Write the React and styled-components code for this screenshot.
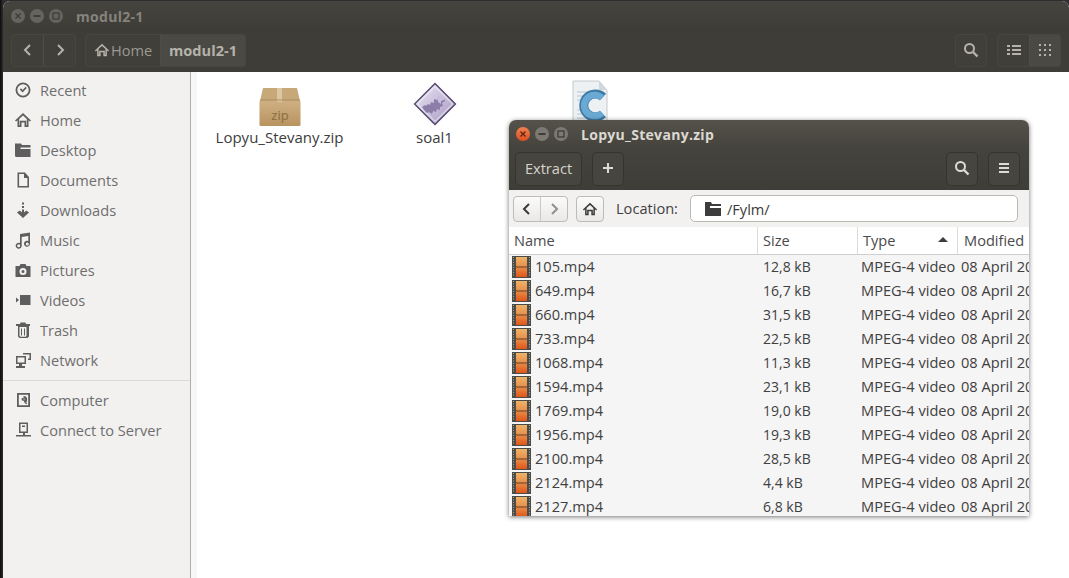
import React from 'react'
import styled, { createGlobalStyle } from 'styled-components'

const GlobalStyle = createGlobalStyle`
  html, body {
    margin: 0;
    padding: 0;
    width: 1069px;
    height: 578px;
    overflow: hidden;
    background: #1a1a1a;
    font-family: 'Open Sans', 'Noto Sans', sans-serif;
  }
`

const Desktop = styled.div`
  position: relative;
  width: 1069px;
  height: 578px;
  overflow: hidden;
  background: linear-gradient(90deg, #0c0c0c 0, #2e2e2e 3px);
`

const FileWindow = styled.div`
  display: flex;
  flex-direction: column;
  height: 577px;
  margin: 1px 0 0 3px;
  border-radius: 7px 7px 0 0;
  overflow: hidden;
  background: #fff;
`

const TitleBar = styled.div`
  display: flex;
  align-items: center;
  gap: 13px;
  height: 30px;
  padding-left: 8px;
  flex: none;
  background: linear-gradient(#45443f, #3d3c37);
`

const Title = styled.span`
  font-size: 14px;
  font-weight: 700;
  letter-spacing: 0.3px;
  color: ${(p) => (p.$active ? '#dcd9d2' : '#86837c')};
`

const WindowButtons = styled.div`
  display: flex;
  gap: 5px;
`

const RoundButton = styled.span`
  display: flex;
  align-items: center;
  justify-content: center;
  width: 14px;
  height: 14px;
  border-radius: 50%;
  background: ${(p) => (p.$close ? 'linear-gradient(#f0824f, #dc4e21)' : p.$active ? '#7b7972' : '#66645e')};
  color: ${(p) => (p.$close ? '#5a2410' : '#3e3d38')};
`

const ToolBar = styled.div`
  display: flex;
  align-items: center;
  height: 41px;
  padding: 3px 8px 5px 8px;
  flex: none;
  background: #3e3d38;
  box-sizing: border-box;
`

const ToolGroup = styled.div`
  display: flex;
  height: 33px;
  margin-right: ${(p) => p.$gap || 0}px;
  border: 1px solid #48463f;
  border-radius: 4px;
  box-sizing: border-box;
  background: #403f3a;
`

const ToolSpacer = styled.div`
  flex: 1;
`

const ToolButton = styled.div`
  display: flex;
  align-items: center;
  justify-content: center;
  gap: 1px;
  width: ${(p) => (p.$width ? `${p.$width}px` : 'auto')};
  padding-bottom: 1px;
  font-size: 14.6px;
  font-weight: ${(p) => (p.$bold ? 700 : 400)};
  color: ${(p) => (p.$bold ? '#b5b2aa' : '#9c9991')};
  background: ${(p) => (p.$on ? '#4a4943' : 'transparent')};
  & + & {
    border-left: 1px solid #4f4d46;
  }
`

const Body = styled.div`
  display: flex;
  flex: 1;
  min-height: 0;
`

const Sidebar = styled.nav`
  width: 188px;
  padding-top: 3px;
  box-sizing: border-box;
  background: #f2f1f0;
  border-right: 1px solid #adadad;
`

const SideRow = styled.div`
  display: flex;
  align-items: center;
  gap: 8px;
  height: 30px;
  padding-left: 11px;
  font-size: 14.6px;
  color: #6e6e6e;
`

const SideIcon = styled.svg`
  width: 18px;
  height: 18px;
  flex: none;
  fill: #5e5e5e;
`

const SideRule = styled.div`
  height: 1px;
  margin: 5px 0 4px;
  background: #dcdbd9;
`

const Gutter = styled.div`
  width: 6px;
  background: #f7f7f6;
`

const IconGrid = styled.div`
  display: flex;
  align-items: flex-start;
  padding: 8px 0 0 5px;
`

const FileItem = styled.div`
  display: flex;
  flex-direction: column;
  align-items: center;
  width: 155px;
`

const FileImage = styled.svg`
  width: 48px;
  height: 48px;
`

const FileName = styled.span`
  margin-top: -1px;
  font-size: 15px;
  color: #3c3c3c;
  white-space: nowrap;
`

const ArchiveWindow = styled.div`
  position: absolute;
  left: 509px;
  top: 120px;
  display: flex;
  flex-direction: column;
  width: 520px;
  height: 396px;
  border-radius: 7px 7px 0 0;
  overflow: hidden;
  background: #f5f5f5;
  box-shadow: 0 1px 5px rgba(0, 0, 0, 0.55);
`

const ArchiveTitleBar = styled(TitleBar)`
  height: 28px;
  padding-left: 7px;
  background: linear-gradient(#55524b, #45433d);
`

const ArchiveToolBar = styled.div`
  display: flex;
  align-items: center;
  gap: 10px;
  height: 42px;
  padding: 4px 9px 4px 6px;
  flex: none;
  box-sizing: border-box;
  background: linear-gradient(#45433d, #3f3d38);
`

const HeaderButton = styled.div`
  display: flex;
  align-items: center;
  justify-content: center;
  width: ${(p) => p.$width || 32}px;
  height: 34px;
  padding-bottom: 2px;
  box-sizing: border-box;
  border: 1px solid #35342f;
  border-radius: 5px;
  background: #47453f;
  font-size: 14.6px;
  color: #d6d3cc;
`

const LocationBar = styled.div`
  display: flex;
  align-items: center;
  height: 37px;
  padding: 0 11px 0 4px;
  flex: none;
  box-sizing: border-box;
  background: #f2f1f0;
`

const NavGroup = styled.div`
  display: flex;
  height: 26px;
  margin-right: 8px;
  border: 1px solid #bdbcb9;
  border-radius: 4px;
  box-sizing: border-box;
  background: linear-gradient(#fbfbfb, #e9e8e6);
  overflow: hidden;
`

const NavButton = styled.div`
  display: flex;
  align-items: center;
  justify-content: center;
  width: ${(p) => p.$width}px;
  color: ${(p) => (p.$dim ? '#8f8f8f' : '#3b3b3b')};
  & + & {
    border-left: 1px solid #c9c8c5;
  }
`

const LocationLabel = styled.span`
  margin: -2px 12px 0 4px;
  font-size: 14.6px;
  color: #3f3f3f;
`

const LocationInput = styled.div`
  display: flex;
  flex: 1;
  align-items: center;
  gap: 5px;
  height: 27px;
  padding-left: 13px;
  box-sizing: border-box;
  border: 1px solid #b9b8b5;
  border-radius: 5px;
  background: #fff;
  font-size: 14.6px;
  color: #3a3a3a;
`

const Columns = 'grid-template-columns: 249px 100px 100px 71px;'

const HeadRow = styled.div`
  display: grid;
  ${Columns}
  height: 28px;
  background: #fff;
  border-bottom: 1px solid #cfcfcd;
  box-sizing: border-box;
  flex: none;
`

const HeadCell = styled.div`
  display: flex;
  align-items: center;
  justify-content: space-between;
  padding: 0 9px 2px 5px;
  font-size: 14.6px;
  color: #4a4a4a;
  white-space: nowrap;
  overflow: hidden;
  border-right: 1px solid #dcdcda;
  &:last-child {
    border-right: 0;
    padding: 0 0 2px 6px;
  }
`

const SortArrow = styled.span`
  width: 0;
  height: 0;
  border-left: 5px solid transparent;
  border-right: 5px solid transparent;
  border-bottom: 5px solid #3d3d3d;
`

const Row = styled.div`
  display: grid;
  ${Columns}
  height: 24px;
  flex: none;
  font-size: 14.6px;
  color: #404040;
`

const Cell = styled.div`
  display: flex;
  align-items: center;
  gap: 4px;
  padding: 0 0 2px 3px;
  white-space: nowrap;
  overflow: hidden;
`

const SizeCell = styled(Cell)`
  padding-left: 5px;
  font-size: 14px;
`

const FilmImage = styled.svg`
  flex: none;
  width: 19px;
  height: 22px;
  margin-bottom: -2px;
`

const sideTop = [
  ['Recent', 'recent'],
  ['Home', 'home'],
  ['Desktop', 'folder'],
  ['Documents', 'doc'],
  ['Downloads', 'down'],
  ['Music', 'music'],
  ['Pictures', 'camera'],
  ['Videos', 'video'],
  ['Trash', 'trash'],
  ['Network', 'network'],
]

const sideBottom = [
  ['Computer', 'computer'],
  ['Connect to Server', 'server'],
]

const files = [
  ['105.mp4', '12,8 kB'],
  ['649.mp4', '16,7 kB'],
  ['660.mp4', '31,5 kB'],
  ['733.mp4', '22,5 kB'],
  ['1068.mp4', '11,3 kB'],
  ['1594.mp4', '23,1 kB'],
  ['1769.mp4', '19,0 kB'],
  ['1956.mp4', '19,3 kB'],
  ['2100.mp4', '28,5 kB'],
  ['2124.mp4', '4,4 kB'],
  ['2127.mp4', '6,8 kB'],
]

const glyphs = {
  recent: (
    <>
      <path fillRule="evenodd" d="M9 1.5a7.5 7.5 0 1 0 0 15 7.5 7.5 0 0 0 0-15zm0 1.8a5.7 5.7 0 1 1 0 11.4A5.7 5.7 0 0 1 9 3.3z" />
      <path d="M5.8 8.4l1.2-1.1 1.6 1.7 3-3.2 1.2 1.1-4.2 4.5z" />
    </>
  ),
  home: <path fillRule="evenodd" d="M9 2L1 9.5l1.1 1.1L3.5 9.3V16h4v-4.5h3V16h4V9.3l1.4 1.3L17 9.5zM5.2 8l3.8-3.6L12.8 8v6.3h-.6V9.8H5.8v4.5h-.6z" />,
  folder: <path d="M1 2.5h6L8 4h8.5v2.5h-10V8h10v8h-14A1.5 1.5 0 0 1 1 14.5z" />,
  doc: <path fillRule="evenodd" d="M3.5 1.5H11l4 4.5v10.500H3.5zm1.600 1.600v11.800h8.300V7H10V3.100z" />,
  down: (
    <>
      <rect x="8" y="1.5" width="2" height="2" />
      <rect x="8" y="5" width="2" height="2" />
      <path d="M8 8.5h2v3l2.200-2 1.200 1.200L9 14.700l-4.400-4 1.200-1.200L8 11.500zM3 11.500l1.300-1.300 4.700 4.300 4.700-4.300 1.300 1.300L9 17z" />
    </>
  ),
  music: <path fillRule="evenodd" d="M6 3l10-1.500v11.200a3 3 0 1 1-1.700-2.700V5L7.700 6v8.700a3 3 0 1 1-1.700-2.700zm-1.300 10.300a1.500 1.500 0 1 0 0 3 1.500 1.500 0 0 0 0-3zm8.600-1.900a1.500 1.500 0 1 0 0 3 1.500 1.500 0 0 0 0-3z" />,
  camera: <path fillRule="evenodd" d="M6.500 3h5l1 2h4v11h-15V5h4zM9 7a3.500 3.500 0 1 0 0 7 3.500 3.500 0 0 0 0-7zm0 2a1.500 1.500 0 1 1 0 3 1.500 1.500 0 0 1 0-3z" />,
  video: (
    <>
      <rect x="6" y="4" width="10.5" height="10" />
      <path d="M2 6.500L5 9l-3 2.500z" />
    </>
  ),
  trash: <path fillRule="evenodd" d="M6.500 1.500h5l.5 1.500h4v2h-1v10.500l-1.500 1.500h-8L4 15.500V5H2V3h4zM5.500 6v9l.8.700h5.400l.8-.700V6zM7 7.500h1v7H7zm3 0h1v7h-1z" />,
  network: (
    <>
      <path fillRule="evenodd" d="M2 5h10v8H8v2h3v2H2v-2h3v-2H2zm1.500 1.500v5h7v-5z" />
      <path d="M9 2h8v7h-3V7.500h1.500V3.500H9z" />
    </>
  ),
  computer: <path fillRule="evenodd" d="M3 2h13v14H3zm1.800 1.800v10.400h9.400V3.800zM9.500 5a3.700 3.700 0 0 1 3.700 3.700c0 1-.4 1.900-1 2.600l1 1.200-1 .8-2.200-2.400zm-.5 1.700a1.500 1.500 0 1 0 0 3 1.500 1.500 0 0 0 0-3z" />,
  server: <path fillRule="evenodd" d="M5 1.500h9v10.500H11v2h6v1.500H2V14h7v-2H5zm1.500 1.500v7.500h6V3zM8 4.500h3V6H8z" />,
}

const SideItem = ({ label, icon }) => (
  <SideRow>
    <SideIcon viewBox="0 0 18 18">{glyphs[icon]}</SideIcon>
    {label}
  </SideRow>
)

const WinControls = ({ active }) => (
  <WindowButtons>
    <RoundButton $close={active} $active={active}>
      <svg width="8" height="8" viewBox="0 0 8 8">
        <path d="M1.500 1.500l5 5m0-5l-5 5" stroke="currentColor" strokeWidth="1.300" />
      </svg>
    </RoundButton>
    <RoundButton $active={active}>
      <svg width="8" height="8" viewBox="0 0 8 8">
        <rect x="0.5" y="3" width="7" height="2" fill="currentColor" />
      </svg>
    </RoundButton>
    <RoundButton $active={active}>
      <svg width="8" height="8" viewBox="0 0 8 8">
        <rect x="1" y="1" width="6" height="6" fill="none" stroke="currentColor" strokeWidth="1.300" />
      </svg>
    </RoundButton>
  </WindowButtons>
)

const Chevron = ({ dir, color = 'currentColor', size = 14 }) => (
  <svg width={size} height={size} viewBox="0 0 14 14">
    <path
      d={dir === 'left' ? 'M9 2L4 7l5 5' : 'M5 2l5 5-5 5'}
      fill="none"
      stroke={color}
      strokeWidth="2"
    />
  </svg>
)

const HomeGlyph = ({ color, size = 16 }) => (
  <svg width={size} height={size} viewBox="0 0 18 18" fill={color}>
    {glyphs.home}
  </svg>
)

const SearchGlyph = ({ color }) => (
  <svg width="16" height="16" viewBox="0 0 16 16">
    <circle cx="6.5" cy="6.5" r="4.5" fill="none" stroke={color} strokeWidth="2" />
    <path d="M10 10l4.500 4.500" stroke={color} strokeWidth="2.400" />
  </svg>
)

const ZipIcon = () => (
  <FileImage viewBox="0 0 48 48">
    <defs>
      <linearGradient id="boxFront" x1="0" y1="0" x2="0" y2="1">
        <stop offset="0" stopColor="#d0b184" />
        <stop offset="1" stopColor="#b8935f" />
      </linearGradient>
    </defs>
    <path d="M7 8h34l3 13H4z" fill="#c7a878" />
    <rect x="3.5" y="20" width="41" height="26" rx="1.5" fill="url(#boxFront)" />
    <rect x="21" y="8" width="5" height="14" fill="#dcc7a4" />
    <path d="M4 20h40" stroke="#a98a5c" />
    <text x="24" y="40" textAnchor="middle" fontSize="13" fontFamily="Open Sans" fill="#8a6c44">
      zip
    </text>
  </FileImage>
)

const DiamondIcon = () => (
  <FileImage viewBox="0 0 48 48">
    <defs>
      <linearGradient id="diamond" x1="0" y1="0" x2="1" y2="1">
        <stop offset="0" stopColor="#eee9f5" />
        <stop offset="1" stopColor="#a395c0" />
      </linearGradient>
    </defs>
    <path d="M24 3.500L44.500 24 24 44.500 3.500 24z" fill="url(#diamond)" stroke="#4f4368" strokeWidth="1.300" />
    <path d="M24 6.500L41.500 24 24 41.500 6.500 24z" fill="none" stroke="#f7f4fa" />
    <path d="M11 27l3-2 1 1 2-2 2 1 1-3 3 1 0-4 3 1 2-3 2 2 3-1 1 3-3 2 1 3-3 1 0 3-3-1-1 3-3-1-1 3-3-2-2 1-3-3z" fill="#8d7da9" />
    <path d="M26 17l3-2 2 2 3 0-1 3-3 1 0 3-3-2z" fill="#c9bedb" />
  </FileImage>
)

const CFileIcon = () => (
  <FileImage viewBox="0 0 48 48">
    <path d="M7 1h26l8 9v38H7z" fill="#eef1f3" stroke="#c4c8cb" />
    <path d="M33 1v9h8z" fill="#cfd8de" />
    <path d="M11 12h18M11 16h18M11 20h6M11 30h6M11 34h22M11 38h22" stroke="#b8c6d0" />
    <path d="M37 17a11.500 11.500 0 1 0 0 17" fill="none" stroke="#3f7aa6" strokeWidth="9" />
    <path d="M36 18a10.500 10.500 0 1 0 0 15" fill="none" stroke="#69a9d4" strokeWidth="6.500" />
  </FileImage>
)

const FilmIcon = () => (
  <FilmImage viewBox="0 0 19 22">
    <defs>
      <linearGradient id="film" x1="0" y1="0" x2="0" y2="1">
        <stop offset="0" stopColor="#eeb46a" />
        <stop offset="0.5" stopColor="#e88d45" />
        <stop offset="1" stopColor="#e0561a" />
      </linearGradient>
    </defs>
    <rect width="19" height="22" fill="#4b4b48" />
    <path d="M1.500 1v20M17.500 1v20" stroke="#a8a8a3" strokeDasharray="1 1.500" />
    <rect x="4" y="1" width="11" height="20" fill="url(#film)" />
    <path d="M4 11h11" stroke="#5a4030" />
  </FilmImage>
)

export default function App() {
  return (
    <Desktop>
      <GlobalStyle />
      <FileWindow>
        <TitleBar>
          <WinControls />
          <Title>modul2-1</Title>
        </TitleBar>
        <ToolBar>
          <ToolGroup $gap={9}>
            <ToolButton $width={31}>
              <Chevron dir="left" color="#b5b2aa" />
            </ToolButton>
            <ToolButton $width={31}>
              <Chevron dir="right" color="#b5b2aa" />
            </ToolButton>
          </ToolGroup>
          <ToolGroup>
            <ToolButton $width={74}>
              <HomeGlyph color="#b5b2aa" />
              Home
            </ToolButton>
            <ToolButton $width={84} $bold $on>
              modul2-1
            </ToolButton>
          </ToolGroup>
          <ToolSpacer />
          <ToolGroup $gap={10}>
            <ToolButton $width={30}>
              <SearchGlyph color="#b5b2aa" />
            </ToolButton>
          </ToolGroup>
          <ToolGroup>
            <ToolButton $width={31}>
              <svg width="14" height="12" viewBox="0 0 14 12" fill="#b5b2aa">
                <path d="M0 1h3v2H0zM5 1h9v2H5zM0 5h3v2H0zM5 5h9v2H5zM0 9h3v2H0zM5 9h9v2H5z" />
              </svg>
            </ToolButton>
            <ToolButton $width={30} $on>
              <svg width="12" height="12" viewBox="0 0 12 12" fill="#b5b2aa">
                <path d="M0 0h2v2H0zM5 0h2v2H5zM10 0h2v2h-2zM0 5h2v2H0zM5 5h2v2H5zM10 5h2v2h-2zM0 10h2v2H0zM5 10h2v2H5zM10 10h2v2h-2z" />
              </svg>
            </ToolButton>
          </ToolGroup>
        </ToolBar>
        <Body>
          <Sidebar>
            {sideTop.map(([label, icon]) => (
              <SideItem key={label} label={label} icon={icon} />
            ))}
            <SideRule />
            {sideBottom.map(([label, icon]) => (
              <SideItem key={label} label={label} icon={icon} />
            ))}
          </Sidebar>
          <Gutter />
          <IconGrid>
            <FileItem>
              <ZipIcon />
              <FileName>Lopyu_Stevany.zip</FileName>
            </FileItem>
            <FileItem>
              <DiamondIcon />
              <FileName>soal1</FileName>
            </FileItem>
            <FileItem>
              <CFileIcon />
            </FileItem>
          </IconGrid>
        </Body>
      </FileWindow>

      <ArchiveWindow>
        <ArchiveTitleBar>
          <WinControls active />
          <Title $active>Lopyu_Stevany.zip</Title>
        </ArchiveTitleBar>
        <ArchiveToolBar>
          <HeaderButton $width={67}>Extract</HeaderButton>
          <HeaderButton>
            <svg width="12" height="12" viewBox="0 0 12 12">
              <path d="M6 1v10M1 6h10" stroke="#dedbd4" strokeWidth="2" />
            </svg>
          </HeaderButton>
          <ToolSpacer />
          <HeaderButton>
            <SearchGlyph color="#dedbd4" />
          </HeaderButton>
          <HeaderButton>
            <svg width="12" height="12" viewBox="0 0 12 12" fill="#dedbd4">
              <path d="M1 1h10v2H1zM1 5h10v2H1zM1 9h10v2H1z" />
            </svg>
          </HeaderButton>
        </ArchiveToolBar>
        <LocationBar>
          <NavGroup>
            <NavButton $width={26}>
              <Chevron dir="left" />
            </NavButton>
            <NavButton $width={26} $dim>
              <Chevron dir="right" />
            </NavButton>
          </NavGroup>
          <NavGroup>
            <NavButton $width={26}>
              <HomeGlyph color="#3b3b3b" />
            </NavButton>
          </NavGroup>
          <LocationLabel>Location:</LocationLabel>
          <LocationInput>
            <svg width="18" height="16" viewBox="0 0 18 16" fill="#3d3d3d">
              <path d="M1 1h6l1 2h9v2H6v2h11v8H1z" />
            </svg>
            /Fylm/
          </LocationInput>
        </LocationBar>
        <HeadRow>
          <HeadCell>Name</HeadCell>
          <HeadCell>Size</HeadCell>
          <HeadCell>
            Type
            <SortArrow />
          </HeadCell>
          <HeadCell>Modified</HeadCell>
        </HeadRow>
        {files.map(([name, size]) => (
          <Row key={name}>
            <Cell>
              <FilmIcon />
              {name}
            </Cell>
            <SizeCell>{size}</SizeCell>
            <Cell>MPEG-4 video</Cell>
            <Cell>08 April 2018</Cell>
          </Row>
        ))}
      </ArchiveWindow>
    </Desktop>
  )
}
